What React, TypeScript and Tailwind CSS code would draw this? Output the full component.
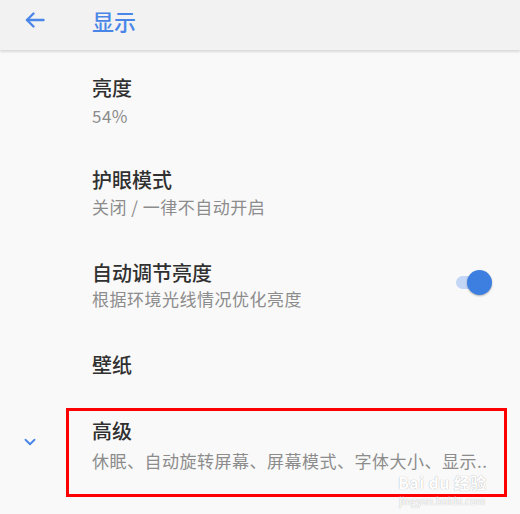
import { ChevronDown } from "lucide-react";

const font = { fontFamily: '"Noto Sans CJK SC", "Noto Sans", sans-serif' };

type RowProps = {
  title: string;
  subtitle?: string;
  className?: string;
  gap?: string;
};

function Row({ title, subtitle, className, gap }: RowProps) {
  return (
    <div className={"flex flex-col " + (className ?? "")}>
      <span className="text-[20px] leading-[26px] font-medium text-[#303030]">
        {title}
      </span>
      {subtitle && (
        <span className={"text-[17px] leading-[22px] tracking-[0.5px] text-[#8c8c8c] whitespace-nowrap " + (gap ?? "mt-[4px]")}>
          {subtitle}
        </span>
      )}
    </div>
  );
}

export default function App() {
  return (
    <div
      style={font}
      className="relative w-[520px] h-[514px] overflow-hidden bg-[#f9f9f9]"
    >
      <div className="flex items-start h-[50px] bg-[#f2f2f2] shadow-[0_2px_2px_rgba(0,0,0,0.12)]">
        <div className="w-[92px] pl-[25px] pt-[12px]">
          <svg width="20" height="16" viewBox="0 0 20 16" fill="none" stroke="#4a86e8" strokeWidth="2.4" strokeLinecap="round" strokeLinejoin="round">
            <path d="M18.5 8H2" />
            <path d="M8.5 1.5 2 8l6.5 6.5" />
          </svg>
        </div>
        <span className="text-[22px] leading-[26px] text-[#4a86e8] font-medium pt-[7px]">
          显示
        </span>
      </div>

      <div className="pl-[92px] pr-[30px]">
        <Row title="亮度" subtitle="54%" className="mt-[25px]" />
        <Row title="护眼模式" subtitle="关闭 / 一律不自动开启" className="mt-[40px]" gap="mt-[3px]" />
        <div className="flex items-center justify-between mt-[42px]">
          <Row title="自动调节亮度" subtitle="根据环境光线情况优化亮度" gap="mt-[2px]" />
          <div className="relative w-[36px] h-[26px] flex items-center mr-[-2px] mt-[-5px]">
            <div className="w-[32px] h-[13px] rounded-full bg-[#c3d6f5]" />
            <div className="absolute right-0 top-0 w-[25px] h-[25px] rounded-full bg-[#3d7fe0] shadow-[0_1px_2px_rgba(0,0,0,0.3)]" />
          </div>
        </div>
        <Row title="壁纸" className="mt-[42px]" />
      </div>

      <div className="flex mt-[30px]">
        <div className="w-[66px] flex justify-center pt-[25px] pr-[6px]">
          <ChevronDown size={18} strokeWidth={2.5} className="text-[#4a86e8]" />
        </div>
        <div className="w-[441px] h-[89px] border-[3px] border-[#ff0000] pl-[23px] pt-[7px]">
          <Row title="高级" subtitle="休眠、自动旋转屏幕、屏幕模式、字体大小、显示.." gap="mt-[6px]" />
        </div>
      </div>

      <div className="absolute left-[398px] top-[474px] flex flex-col items-center text-white [text-shadow:0_0_1px_#a0a0a0]">
        <span className="text-[16px] leading-[16px] font-bold tracking-wide">Bai du 经验</span>
        <span className="text-[10px] leading-[10px] mt-[6px]">jingyan.baidu.com</span>
      </div>
    </div>
  );
}
